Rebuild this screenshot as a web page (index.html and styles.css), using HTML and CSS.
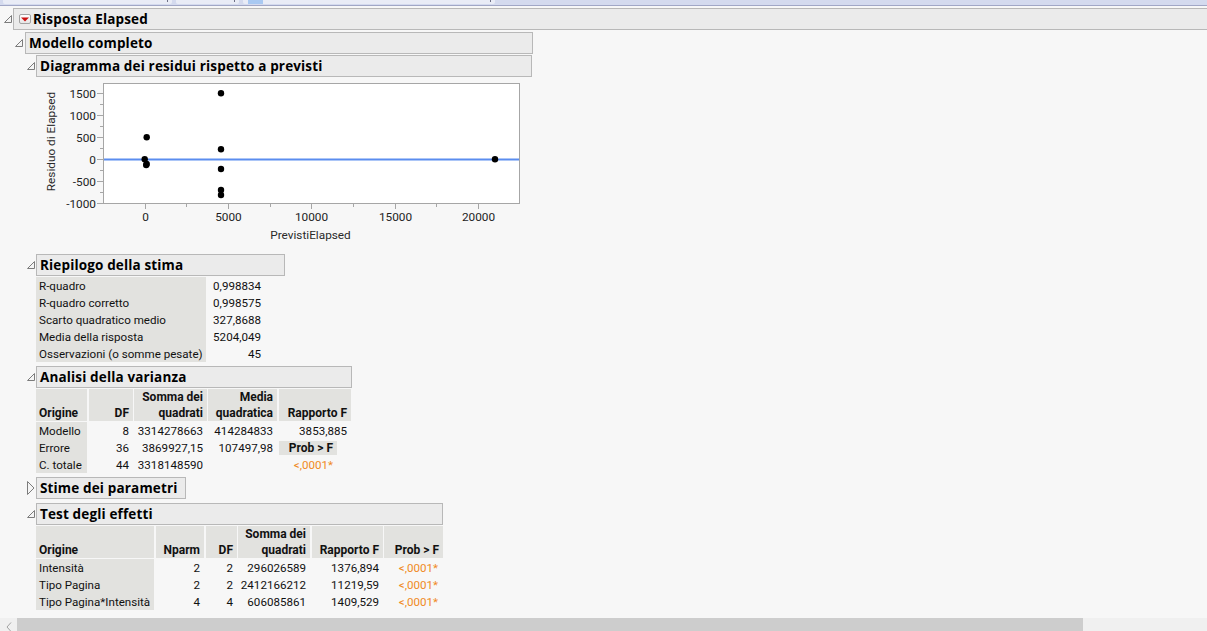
FILE: index.html
```html
<!DOCTYPE html>
<html lang="it">
<head>
<meta charset="utf-8">
<title>Risposta Elapsed</title>
<link rel="stylesheet" href="styles.css">
</head>
<body>
<div class="window">
  <div class="strip">
    <span class="combo combo-a"><span class="combo-mark"></span></span>
    <span class="combo combo-b"><span class="combo-mark"></span></span>
    <span class="combo combo-c"><span class="combo-sel"></span><span class="combo-mark"></span></span>
  </div>

  <div class="report">
    <section class="node lvl0">
      <div class="node-head">
        <span class="tri-slot"><svg class="tri" width="8" height="8" viewBox="0 0 8 8"><path d="M0.5 7.5H7.5V0.5Z"/></svg></span>
        <div class="title-box tb-risposta"><span class="menu-btn"><svg width="8" height="5" viewBox="0 0 8 5"><path d="M0 0.5H8L4 4.5Z"/></svg></span>Risposta Elapsed</div>
      </div>
      <div class="node-body">
        <section class="node lvl1">
          <div class="node-head">
            <span class="tri-slot"><svg class="tri" width="8" height="8" viewBox="0 0 8 8"><path d="M0.5 7.5H7.5V0.5Z"/></svg></span>
            <div class="title-box tb-modello">Modello completo</div>
          </div>
          <div class="node-body">

            <section class="node lvl2">
              <div class="node-head">
                <span class="tri-slot"><svg class="tri" width="8" height="8" viewBox="0 0 8 8"><path d="M0.5 7.5H7.5V0.5Z"/></svg></span>
                <div class="title-box tb-diagramma">Diagramma dei residui rispetto a previsti</div>
              </div>
              <div class="node-body">
                <svg class="plot" width="496" height="172" viewBox="0 0 496 172">
                  <rect class="frame" x="67.5" y="5.5" width="416" height="120"/>
                  <line class="zero" x1="68" y1="81.5" x2="483" y2="81.5"/>
                  <path class="ticks" d="M61 15.5H67M61 37.5H67M61 59.5H67M61 81.5H67M61 103.5H67M61 125.5H67M64 26.5H67M64 48.5H67M64 70.5H67M64 92.5H67M64 114.5H67M109.5 126V131M192.5 126V131M275.5 126V131M359.5 126V131M442.5 126V131M150.5 126V129M234.5 126V129M317.5 126V129M400.5 126V129"/>
                  <g class="ylabels">
                    <text x="60" y="19.5">1500</text>
                    <text x="60" y="41.5">1000</text>
                    <text x="60" y="63.5">500</text>
                    <text x="60" y="85.5">0</text>
                    <text x="60" y="107.5">-500</text>
                    <text x="60" y="129.5">-1000</text>
                  </g>
                  <g class="xlabels">
                    <text x="109.5" y="143">0</text>
                    <text x="192.5" y="143">5000</text>
                    <text x="275.5" y="143">10000</text>
                    <text x="359.5" y="143">15000</text>
                    <text x="442.5" y="143">20000</text>
                  </g>
                  <text class="axis-title" x="274.5" y="161">PrevistiElapsed</text>
                  <text class="axis-title" transform="translate(18.5 63.5) rotate(-90)">Residuo di Elapsed</text>
                  <g class="dots">
                    <circle cx="185" cy="15.3" r="3.2"/>
                    <circle cx="110.7" cy="59.3" r="3.2"/>
                    <circle cx="108.7" cy="81.3" r="3.2"/>
                    <circle cx="110.7" cy="86" r="3.2"/>
                    <circle cx="110.2" cy="87" r="3.2"/>
                    <circle cx="185" cy="71.3" r="3.2"/>
                    <circle cx="185" cy="91" r="3.2"/>
                    <circle cx="185" cy="112" r="3.2"/>
                    <circle cx="185" cy="117" r="3.2"/>
                    <circle cx="459" cy="81.3" r="3.2"/>
                  </g>
                </svg>
              </div>
            </section>

            <section class="node lvl2">
              <div class="node-head">
                <span class="tri-slot"><svg class="tri" width="8" height="8" viewBox="0 0 8 8"><path d="M0.5 7.5H7.5V0.5Z"/></svg></span>
                <div class="title-box tb-riepilogo">Riepilogo della stima</div>
              </div>
              <div class="node-body">
                <div class="summary">
                  <div class="lbl">R-quadro</div><div class="val">0,998834</div>
                  <div class="lbl">R-quadro corretto</div><div class="val">0,998575</div>
                  <div class="lbl">Scarto quadratico medio</div><div class="val">327,8688</div>
                  <div class="lbl">Media della risposta</div><div class="val">5204,049</div>
                  <div class="lbl">Osservazioni (o somme pesate)</div><div class="val">45</div>
                </div>
              </div>
            </section>

            <section class="node lvl2">
              <div class="node-head">
                <span class="tri-slot"><svg class="tri" width="8" height="8" viewBox="0 0 8 8"><path d="M0.5 7.5H7.5V0.5Z"/></svg></span>
                <div class="title-box tb-analisi">Analisi della varianza</div>
              </div>
              <div class="node-body">
                <div class="grid anova">
                  <div class="th left">Origine</div>
                  <div class="th">DF</div>
                  <div class="th">Somma dei<br>quadrati</div>
                  <div class="th">Media<br>quadratica</div>
                  <div class="th">Rapporto F</div>

                  <div class="lbl">Modello</div>
                  <div class="num">8</div>
                  <div class="num">3314278663</div>
                  <div class="num">414284833</div>
                  <div class="num">3853,885</div>

                  <div class="lbl">Errore</div>
                  <div class="num">36</div>
                  <div class="num">3869927,15</div>
                  <div class="num">107497,98</div>
                  <div class="pcell"><span class="pbox phead">Prob &gt; F</span></div>

                  <div class="lbl">C. totale</div>
                  <div class="num">44</div>
                  <div class="num">3318148590</div>
                  <div class="num"></div>
                  <div class="pcell"><span class="pbox sig">&lt;,0001*</span></div>
                </div>
              </div>
            </section>

            <section class="node lvl2 closed">
              <div class="node-head">
                <span class="tri-slot"><svg class="tri" width="8" height="14" viewBox="0 0 8 14"><path d="M0.5 0.5L7 7L0.5 13.5Z"/></svg></span>
                <div class="title-box tb-stime">Stime dei parametri</div>
              </div>
            </section>

            <section class="node lvl2">
              <div class="node-head">
                <span class="tri-slot"><svg class="tri" width="8" height="8" viewBox="0 0 8 8"><path d="M0.5 7.5H7.5V0.5Z"/></svg></span>
                <div class="title-box tb-test">Test degli effetti</div>
              </div>
              <div class="node-body">
                <div class="grid effects">
                  <div class="th left">Origine</div>
                  <div class="th">Nparm</div>
                  <div class="th">DF</div>
                  <div class="th">Somma dei<br>quadrati</div>
                  <div class="th">Rapporto F</div>
                  <div class="th">Prob &gt; F</div>

                  <div class="lbl">Intensità</div>
                  <div class="num">2</div>
                  <div class="num">2</div>
                  <div class="num">296026589</div>
                  <div class="num">1376,894</div>
                  <div class="num sig">&lt;,0001*</div>

                  <div class="lbl">Tipo Pagina</div>
                  <div class="num">2</div>
                  <div class="num">2</div>
                  <div class="num">2412166212</div>
                  <div class="num">11219,59</div>
                  <div class="num sig">&lt;,0001*</div>

                  <div class="lbl">Tipo Pagina*Intensità</div>
                  <div class="num">4</div>
                  <div class="num">4</div>
                  <div class="num">606085861</div>
                  <div class="num">1409,529</div>
                  <div class="num sig">&lt;,0001*</div>
                </div>
              </div>
            </section>

          </div>
        </section>
      </div>
    </section>
  </div>

  <div class="hscroll">
    <span class="hs-arrow"><svg width="6" height="10" viewBox="0 0 6 10"><path d="M5 0.5L1 5L5 9.5"/></svg></span>
    <span class="hs-thumb"></span>
  </div>
</div>
</body>
</html>
```

FILE: styles.css
```css
:root {
  --bg: #f7f7f7;
  --cell: #e2e2df;
  --hdr: #ebebeb;
  --hdr-border: #b8b8b8;
  --sig: #f08a24;
}

* { box-sizing: border-box; }

html, body {
  margin: 0;
  padding: 0;
  height: 100%;
}

body {
  background: var(--bg);
  font-family: Roboto, "Liberation Sans", sans-serif;
  font-size: 11.6px;
  color: #111;
  overflow: hidden;
}

.window {
  height: 631px;
  display: flex;
  flex-direction: column;
}

/* top toolbar strip (partially visible) */
.strip {
  flex: none;
  height: 6px;
  background: #d4daee;
  border-bottom: 1px solid #a1a7c6;
  display: flex;
  align-items: flex-start;
  padding-left: 3px;
}
.combo {
  position: relative;
  height: 4px;
  background: #e9ecf6;
  border-radius: 0 0 2px 2px;
}
.combo-a { width: 169px; margin-right: 4px; }
.combo-b { width: 63px; margin-right: 4px; }
.combo-c { width: 252px; }
.combo-mark {
  position: absolute;
  right: 4px;
  top: 0;
  width: 1px;
  height: 2px;
  background: #6d7086;
}
.combo-sel {
  position: absolute;
  left: 5px;
  top: 0;
  width: 15px;
  height: 4px;
  background: #a9c9f2;
}

/* report outline */
.report {
  flex: 1;
  overflow: hidden;
  padding: 2px 0 0 4px;
}

.node-head {
  display: flex;
  align-items: center;
  height: 22px;
}
.tri-slot {
  flex: none;
  width: 9px;
  display: flex;
  align-items: center;
}
.lvl1 > .node-head .tri-slot { width: 10px; }
.tri path {
  fill: #f5f5f5;
  stroke: #7c7c7c;
  stroke-width: 1;
  stroke-linejoin: miter;
}

.title-box {
  height: 22px;
  border: 1px solid var(--hdr-border);
  background: var(--hdr);
  padding-left: 3px;
  font-family: "Open Sans", Roboto, sans-serif;
  font-weight: 700;
  font-size: 13.5px;
  letter-spacing: 0.15px;
  line-height: 20px;
  color: #000;
  white-space: nowrap;
  display: flex;
  align-items: center;
}
.tb-risposta { flex: 1; margin-right: -2px; padding-left: 5px; }
.tb-modello { width: 508px; }
.tb-diagramma { width: 496px; }
.tb-riepilogo { width: 249px; }
.tb-analisi { width: 316px; }
.tb-stime { width: 150px; }
.tb-test { width: 407px; }

.menu-btn {
  flex: none;
  width: 12px;
  height: 10px;
  margin-right: 2px;
  border: 1px solid #a3a3a3;
  border-radius: 2px;
  background: linear-gradient(#ffffff, #e6e6e6);
  display: flex;
  align-items: center;
  justify-content: center;
}
.menu-btn path { fill: #cc1111; }

.lvl0 > .node-body { padding: 2px 0 0 11px; }
.lvl1 > .node-body { padding: 1px 0 0 12px; }
.lvl2 > .node-body { padding: 1px 0 0 9px; }
.lvl2 + .lvl2 { margin-top: 4px; }

/* plot */
.plot { display: block; }
.plot .frame { fill: #ffffff; stroke: #a6a6a6; stroke-width: 1; }
.plot .zero { stroke: #5b8def; stroke-width: 2; }
.plot .ticks { fill: none; stroke: #a6a6a6; stroke-width: 1; }
.plot text {
  font-family: Roboto, "Liberation Sans", sans-serif;
  font-size: 11.8px;
  fill: #1e1e1e;
}
.plot .ylabels text { text-anchor: end; }
.plot .xlabels text { text-anchor: middle; }
.plot .axis-title { text-anchor: middle; fill: #2a2a2a; }
.plot .dots circle { fill: #000; }

/* summary table */
.summary {
  display: grid;
  grid-template-columns: 170px 59px;
  grid-auto-rows: 17px;
}
.lbl, .val, .num {
  line-height: 16px;
  padding-top: 1px;
  white-space: nowrap;
}
.lbl {
  background: var(--cell);
  padding-left: 3px;
}
.val, .num {
  text-align: right;
  padding-right: 4px;
}

/* column tables */
.grid {
  display: grid;
  grid-template-rows: 33px;
  grid-auto-rows: 17px;
}
.grid > .th {
  height: 33px;
  background: var(--cell);
  border-bottom: 1px solid var(--bg);
  font-size: 12px;
  font-weight: 700;
  line-height: 16px;
  text-align: right;
  padding: 0 4px 0 0;
  display: flex;
  flex-direction: column;
  justify-content: flex-end;
  white-space: nowrap;
}
.grid > .th.left { text-align: left; padding-left: 3px; }
.grid > .th:not(.left) { align-items: flex-end; }

.anova { grid-template-columns: 53px 45px 74px 71px 72px; }
.anova > :nth-child(5n+1) { border-right: 2px solid var(--bg); }
.anova > :nth-child(5n+2) { border-right: 1px solid var(--bg); }
.anova > :nth-child(5n+3) { border-right: 1px solid var(--bg); }
.anova > :nth-child(5n+4) { border-right: 2px solid var(--bg); }

.effects { grid-template-columns: 120px 50px 32px 74px 72px 59px; }
.effects > :nth-child(6n+1) { border-right: 2px solid var(--bg); }
.effects > :nth-child(6n+2) { border-right: 2px solid var(--bg); }
.effects > :nth-child(6n+3) { border-right: 1px solid var(--bg); }
.effects > :nth-child(6n+4) { border-right: 2px solid var(--bg); }
.effects > :nth-child(6n+5) { border-right: 1px solid var(--bg); }

.pcell {
  display: flex;
  align-items: center;
  padding-top: 1px;
}
.pbox {
  display: block;
  width: 58px;
  text-align: right;
  padding-right: 4px;
  white-space: nowrap;
}
.phead {
  background: var(--cell);
  font-size: 12px;
  font-weight: 700;
  height: 14px;
  line-height: 14px;
}
.sig { color: var(--sig); }
.effects .num.sig { padding-right: 5px; }

/* horizontal scrollbar */
.hscroll {
  flex: none;
  height: 13px;
  background: #f0f0f0;
  display: flex;
  overflow: hidden;
}
.hs-arrow {
  flex: none;
  width: 17px;
  padding: 4px 0 0 6px;
}
.hs-arrow svg { display: block; }
.hs-arrow path { fill: none; stroke: #a2a2a2; stroke-width: 1; }
.hs-thumb {
  flex: none;
  width: 1066px;
  background: #cdcdcd;
}
```
